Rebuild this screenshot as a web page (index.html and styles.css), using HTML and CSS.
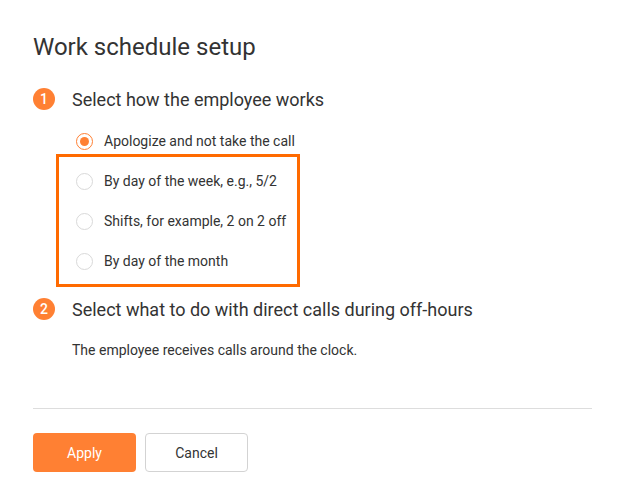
FILE: index.html
```html
<!DOCTYPE html>
<html>
<head>
<meta charset="utf-8">
<link rel="stylesheet" href="styles.css">
</head>
<body>
<div class="page">
  <h1 class="title">Work schedule setup</h1>
  <div class="step">
    <span class="num">1</span>
    <span class="step-title">Select how the employee works</span>
  </div>
  <div class="options">
    <label class="opt"><span class="radio checked"></span><span>Apologize and not take the call</span></label>
    <div class="highlight">
      <label class="opt"><span class="radio"></span><span>By day of the week, e.g., 5/2</span></label>
      <label class="opt"><span class="radio"></span><span>Shifts, for example, 2 on 2 off</span></label>
      <label class="opt"><span class="radio"></span><span>By day of the month</span></label>
    </div>
  </div>
  <div class="step step2">
    <span class="num">2</span>
    <span class="step-title">Select what to do with direct calls during off-hours</span>
  </div>
  <p class="desc">The employee receives calls around the clock.</p>
  <hr class="divider">
  <div class="buttons">
    <button class="btn primary">Apply</button>
    <button class="btn secondary">Cancel</button>
  </div>
</div>
</body>
</html>
```
FILE: styles.css
```css
* { box-sizing: border-box; }
html, body { margin: 0; padding: 0; background: #fff; }
body { font-family: Roboto, "Noto Sans", sans-serif; color: #333; }
.page { padding: 33px 32px 0 33px; }
.title { margin: 0; font-size: 24px; font-weight: 400; line-height: 28px; color: #333; }
.step { display: flex; align-items: center; margin-top: 26px; height: 24px; }
.num {
  width: 22px; height: 22px; border-radius: 50%;
  background: #ff8033; color: #fff; font-size: 14px; font-weight: 500;
  display: flex; align-items: center; justify-content: center;
  margin-right: 17px;
}
.step-title { font-size: 18px; color: #333; }
.options { margin-left: 23px; margin-top: 10px; }
.opt { display: flex; align-items: center; height: 40px; padding-left: 20px; font-size: 14px; color: #333; }
.radio {
  width: 17px; height: 17px; border-radius: 50%; border: 1px solid #d9d9d9;
  margin-right: 11px; display: flex; align-items: center; justify-content: center; background: #fff;
}
.radio.checked { border-color: #ff8033; }
.radio.checked::after { content: ""; width: 9px; height: 9px; border-radius: 50%; background: #ff8033; }
.highlight { border: 3px solid #ff6a00; width: 244px; margin-top: -7px; padding-top: 4px; padding-bottom: 3px; margin-left: 0; }
.highlight .opt { padding-left: 17px; }
.step2 { margin-top: 10px; }
.desc { margin: 19px 0 0 39px; font-size: 14px; line-height: 20px; color: #333; }
.divider { border: 0; border-top: 1px solid #ddd; margin: 48px 0 0 0; }
.buttons { display: flex; gap: 9px; margin-top: 24px; }
.btn { height: 39px; width: 103px; border-radius: 4px; font-family: inherit; font-size: 14px; cursor: pointer; }
.primary { background: #ff8033; color: #fff; border: 0; }
.secondary { background: #fff; color: #333; border: 1px solid #d3d3d3; }
```
